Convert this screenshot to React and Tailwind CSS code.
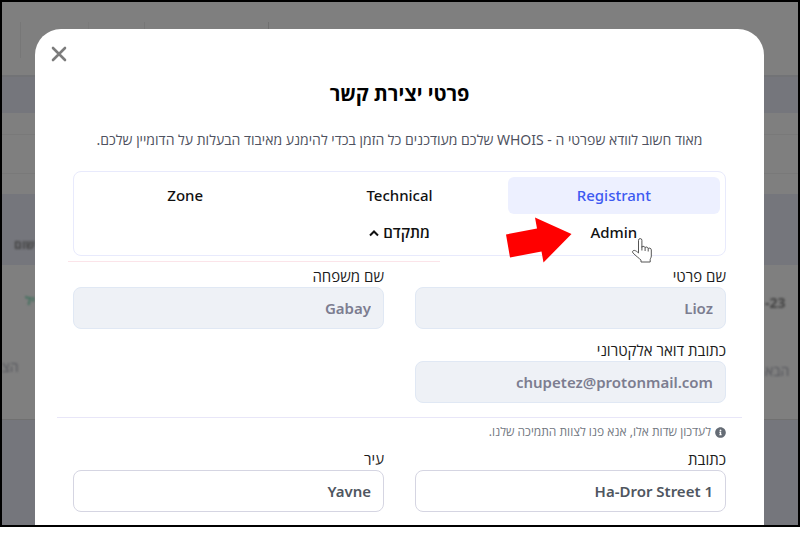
import React, { useState } from "react";
import { FaInfoCircle } from "react-icons/fa";

const tabs = ["Registrant", "Technical", "Zone", "Admin"];

const Backdrop = () => (
  <div className="absolute inset-0 flex flex-col bg-[#7f7f7f]" aria-hidden="true">
    <div className="h-[73px] flex">
      <div className="w-px h-9 mt-5 ml-[18px] bg-[#777777]" />
      <div className="w-px h-9 mt-5 ml-[67px] bg-[#7a7a7a]" />
      <div className="w-px h-9 mt-5 ml-[55px] bg-[#777777]" />
      <div className="w-px h-9 mt-5 ml-[123px] bg-[#707070]" />
    </div>
    <div className="h-[38px] bg-[#75767c] border-t-2 border-[#727376]" />
    <div className="h-[21px]" />
    <div className="h-10 border-y border-[#797979]" />
    <div className="h-5" />
    <div className="h-[71px] bg-[#75767c] flex items-end pb-3">
      <span className="ml-3 w-5 whitespace-nowrap text-xs font-bold text-[#444444] blur-[1px]">שום</span>
    </div>
    <div className="h-[154px] flex justify-between pt-6 text-sm">
      <div className="w-[33px] flex flex-col gap-12 pt-1 blur-[1px]">
        <span className="self-end text-xs font-bold text-[#3f6f5c]">יל</span>
        <span className="text-[#55565c]">הצ</span>
      </div>
      <div className="w-[33px] flex flex-col gap-12 pt-1 blur-[1px]">
        <span dir="ltr" className="text-sm font-bold text-[#444444]">-23</span>
        <span className="text-[#55565c]">הבא</span>
      </div>
    </div>
    <div className="grow bg-[#75767c] border-t border-[#707070]" />
  </div>
);

const Field = ({ id, label, value, type = "text", disabled = false, onChange }) => (
  <div className="flex flex-col">
    <label htmlFor={id} className="text-[15px] leading-[22px] text-[#1c1c1c]">
      {label}
    </label>
    <input
      id={id}
      name={id}
      type={type}
      value={value}
      disabled={disabled}
      onChange={onChange}
      className="h-[42px] w-full rounded-lg border border-[#d5d5e2] bg-white px-3 text-right text-[15px] font-semibold text-[#4f5660] outline-none focus:border-[#3d5af1] disabled:border-[#e0e8f4] disabled:bg-[#eef1f6] disabled:text-[#7c7d90]"
    />
  </div>
);

const ArrowPointer = () => (
  <svg className="absolute -left-1 top-0 pointer-events-none" width="72" height="52" viewBox="504 214 72 52" aria-hidden="true">
    <path d="M506 234.5 537 228.5 535 217.5 571.5 234 543.5 262.5 541.5 251.5 510 257.5Z" fill="#ff0000" />
  </svg>
);

const HandPointer = () => (
  <svg className="absolute left-[123px] top-[23px] pointer-events-none" width="24" height="28" viewBox="0 0 24 28" aria-hidden="true">
    <path
      d="M7.500 16V3.300a1.700 1.700 0 0 1 3.400 0v7c0-1.400 3-1.400 3.200.5 .3-1.300 2.900-1.100 3.100.9 .5-1.200 3.100-.7 3.100 1.200V19c0 1.800-1.100 2.600-1.100 3.600v2.400H10v-1.900c-1.400-1.400-5.900-4.900-7.900-7 -1.200-1.300-.3-2.900 1.200-2.700 1.500.2 2.800 1.300 4.200 2.600ZM10.900 9.500v4M14.100 10.800v3.200M17.200 11.700v2.800"
      fill="#fff"
      stroke="#555"
      strokeWidth="1"
      strokeLinejoin="round"
    />
  </svg>
);

const App = () => {
  const [activeTab, setActiveTab] = useState("Registrant");
  const [formData, setFormData] = useState({
    address: "Ha-Dror Street 1",
    city: "Yavne",
  });

  const handleChange = (e) => {
    const { name, value } = e.target;
    setFormData((prev) => ({ ...prev, [name]: value }));
  };

  return (
    <div className="bg-white font-['Noto_Sans','Open_Sans',sans-serif]">
      <div className="relative border-2 border-black overflow-hidden">
        <Backdrop />

        <div
          dir="rtl"
          role="dialog"
          aria-labelledby="title"
          className="relative mt-[27px] ml-[33px] mr-[34px] rounded-t-[26px] bg-white pb-[13px]"
        >
          <div className="flex justify-end px-4 pt-[17px]">
            <button type="button" aria-label="סגירה" className="flex">
              <svg width="16" height="16" viewBox="0 0 16 16">
                <path d="M2 2 14 14M14 2 2 14" stroke="#7c7c7c" strokeWidth="2.600" strokeLinecap="round" />
              </svg>
            </button>
          </div>

          <h1 id="title" className="mt-4 text-center text-xl leading-8 font-bold text-black">
            פרטי יצירת קשר
          </h1>
          <p className="mt-5 text-center text-sm leading-5 text-[#4f5260]">
            מאוד חשוב לוודא שפרטי ה - WHOIS שלכם מעודכנים כל הזמן בכדי להימנע מאיבוד הבעלות על הדומיין שלכם.
          </p>

          <div className="mx-[38px] mt-[21px] grid grid-cols-3 gap-x-0.5 rounded-lg border border-[#e8eafc] px-[5px] pt-[5px] pb-1">
            {tabs.map((tab) => (
              <div key={tab} className="relative">
                <button
                  type="button"
                  onClick={() => setActiveTab(tab)}
                  className={`h-[37px] w-full rounded-md text-[15px] font-medium ${
                    activeTab === tab ? "bg-[#edf0ff] text-[#3d5af1]" : "text-[#111111]"
                  }`}
                >
                  {tab}
                </button>
                {tab === "Admin" && (
                  <>
                    <ArrowPointer />
                    <HandPointer />
                  </>
                )}
              </div>
            ))}
            <button type="button" className="h-[37px] flex items-center justify-center gap-1 text-[15px] font-semibold text-[#111111]">
              מתקדם
              <svg width="10" height="8" viewBox="0 0 10 8">
                <path d="M1 6.500 5 2.500 9 6.500" fill="none" stroke="#111" strokeWidth="2" />
              </svg>
            </button>
          </div>
          <div className="mt-[5px] mr-[324px] ml-[33px] border-t border-[#fbe4e9]" />

          <div className="mx-[38px] mt-[3px] grid grid-cols-2 gap-x-[31px] gap-y-[10px]">
            <Field id="firstName" label="שם פרטי" value="Lioz" disabled />
            <Field id="lastName" label="שם משפחה" value="Gabay" disabled />
            <Field id="email" type="email" label="כתובת דואר אלקטרוני" value="chupetez@protonmail.com" disabled />
          </div>

          <hr className="mx-[22px] mt-[14px] border-[#e8e6f8]" />
          <p className="mx-[38px] mt-1 flex items-center gap-1 text-xs leading-5 text-[#72777f]">
            <FaInfoCircle className="size-[11px] text-[#656c75]" />
            לעדכון שדות אלו, אנא פנו לצוות התמיכה שלנו.
          </p>

          <div className="mx-[38px] mt-[6px] grid grid-cols-2 gap-x-[31px] gap-y-[10px]">
            <Field id="address" label="כתובת" value={formData.address} onChange={handleChange} />
            <Field id="city" label="עיר" value={formData.city} onChange={handleChange} />
          </div>
        </div>
      </div>
    </div>
  );
};

export default App;
